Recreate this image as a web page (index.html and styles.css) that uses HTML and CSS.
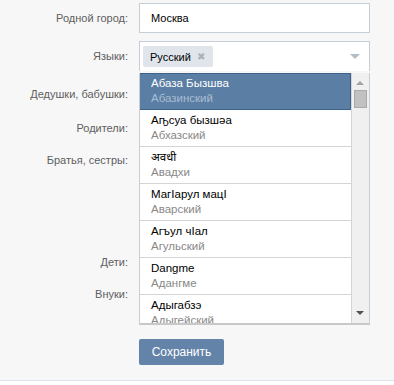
FILE: index.html
```html
<!DOCTYPE html>
<html lang="ru">
<head>
    <meta charset="UTF-8">
    <title>Редактирование профиля</title>
    <link rel="stylesheet" href="styles.css">
</head>
<body>
    <div class="page">
        <form class="profile-form">
            <div class="row row-city">
                <label class="row-label">Родной город:</label>
                <div class="row-field">
                    <input type="text" class="text-input" value="Москва">
                </div>
            </div>

            <div class="row row-langs">
                <label class="row-label">Языки:</label>
                <div class="row-field">
                    <div class="token-box">
                        <span class="token">Русский <span class="token-x">✖</span></span>
                        <span class="token-arrow"></span>
                    </div>
                </div>
            </div>

            <div class="row row-grand"><label class="row-label">Дедушки, бабушки:</label></div>
            <div class="row row-parents"><label class="row-label">Родители:</label></div>
            <div class="row row-siblings"><label class="row-label">Братья, сестры:</label></div>
            <div class="row row-children"><label class="row-label">Дети:</label></div>
            <div class="row row-grandkids"><label class="row-label">Внуки:</label></div>

            <div class="row row-submit">
                <span class="row-label"></span>
                <div class="row-field">
                    <button type="button" class="save-btn">Сохранить</button>
                </div>
            </div>

            <!-- dropdown of languages, lies over the rows -->
            <div class="lang-dropdown">
                <ul class="lang-list">
                    <li class="lang-item selected"><b>Абаза Бызшва</b><span>Абазинский</span></li>
                    <li class="lang-item"><b>Аҧсуа бызшәа</b><span>Абхазский</span></li>
                    <li class="lang-item"><b>अवधी</b><span>Авадхи</span></li>
                    <li class="lang-item"><b>МагӀарул мацӀ</b><span>Аварский</span></li>
                    <li class="lang-item"><b>Агъул чӀал</b><span>Агульский</span></li>
                    <li class="lang-item"><b>Dangme</b><span>Адангме</span></li>
                    <li class="lang-item"><b>Адыгабзэ</b><span>Адыгейский</span></li>
                </ul>
                <div class="scrollbar">
                    <span class="sb-up"></span>
                    <span class="sb-thumb"></span>
                    <span class="sb-down"></span>
                </div>
            </div>
        </form>
    </div>
</body>
</html>
```

FILE: styles.css
```css
body {
    margin: 0;
    background: #fff;
    font-family: Tahoma, "Liberation Sans", "Noto Sans Devanagari", sans-serif;
    font-size: 11px;
}
.page {
    background: #f7f7f7;
    border-bottom: 1px solid #dde4ec;
    padding: 3px 0 15px;
}
.profile-form {
    position: relative;
}
.row {
    display: flex;
    align-items: center;
    gap: 11px;
}
.row-label {
    width: 128px;
    flex-shrink: 0;
    text-align: right;
    color: #5e5e5e;
    line-height: 16px;
}
.row-field {
    width: 231px;
}
.text-input {
    box-sizing: border-box;
    width: 100%;
    height: 30px;
    margin: 0;
    padding: 0 11px;
    border: 1px solid #c5ced7;
    background: #fff;
    font: inherit;
    color: #000;
    outline: none;
}
.row-langs { margin-top: 8px; }
.token-box {
    box-sizing: border-box;
    height: 30px;
    border: 1px solid #c5ced7;
    border-bottom: none;
    background: #fff;
    display: flex;
    align-items: center;
    padding: 0 3px;
    position: relative;
}
.token {
    display: inline-flex;
    align-items: center;
    gap: 6px;
    height: 21px;
    padding: 0 8px 0 7px;
    background: #dfe5eb;
    border-radius: 2px;
    color: #000;
}
.token-x {
    color: #a9b2bc;
    font-size: 10px;
}
.token-arrow {
    position: absolute;
    right: 9px;
    top: 12px;
    border-left: 5px solid transparent;
    border-right: 5px solid transparent;
    border-top: 5px solid #b4bcc6;
}
.row-grand { margin-top: 15px; }
.row-parents { margin-top: 18px; }
.row-siblings { margin-top: 16px; }
.row-children { margin-top: 86px; }
.row-grandkids { margin-top: 16px; }
.row-submit { margin-top: 37px; }
.save-btn {
    height: 26px;
    width: 85px;
    border: none;
    border-radius: 2px;
    background: #6383a8;
    color: #fff;
    font: inherit;
    font-size: 12px;
    cursor: pointer;
}

/* dropdown */
.lang-dropdown {
    position: absolute;
    left: 139px;
    top: 70px;
    width: 231px;
    height: 252px;
    box-sizing: border-box;
    border-left: 1px solid #c5ced7;
    border-right: 1px solid #c5ced7;
    border-bottom: 2px solid #c8c8c8;
    background: #fff;
    display: flex;
    overflow: hidden;
}
.lang-list {
    list-style: none;
    margin: 0;
    padding: 0;
    flex: 1;
}
.lang-item {
    height: 37px;
    padding: 3px 11px 0;
    box-sizing: border-box;
    border-bottom: 1px solid #d4d4d4;
    display: flex;
    flex-direction: column;
    line-height: 15px;
    font-size: 11.5px;
}
.lang-item b {
    font-weight: normal;
    color: #000;
}
.lang-item span {
    color: #888;
}
.lang-item.selected {
    background: #5b7ea4;
    border: 1px solid #3f628b;
    margin-left: -1px;
    padding: 2px 11px 0;
}
.lang-item.selected b { color: #fff; }
.lang-item.selected span { color: #a9bdd2; }
.scrollbar {
    width: 17px;
    flex-shrink: 0;
    background: #f0f0f0;
    border-left: 1px solid #d4d4d4;
    position: relative;
}
.sb-up, .sb-down {
    position: absolute;
    left: 4px;
    border-left: 4px solid transparent;
    border-right: 4px solid transparent;
}
.sb-up {
    top: 8px;
    border-bottom: 4px solid #a3a3a3;
}
.sb-down {
    bottom: 8px;
    border-top: 4px solid #505050;
}
.sb-thumb {
    position: absolute;
    left: 2px;
    top: 17px;
    width: 11px;
    height: 16px;
    background: #c1c1c1;
    border: 1px solid #a9a9a9;
}
```
